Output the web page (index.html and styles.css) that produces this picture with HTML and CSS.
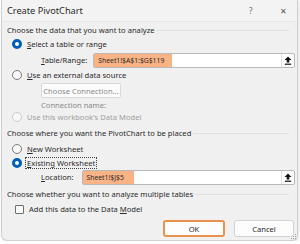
FILE: index.html
```html
<!DOCTYPE html>
<html lang="en">

<head>
    <meta charset="UTF-8">
    <meta name="viewport" content="width=device-width, initial-scale=1.0">
    <title>Create PivotChart</title>
    <link rel="stylesheet" href="styles.css">
</head>

<body>
    <div class="dialog">
        <div class="titlebar">
            <span class="title">Create PivotChart</span>
            <span class="help">?</span>
            <span class="close">&#x2715;</span>
        </div>

        <div class="content">
            <div class="group-head head-1">Choose the data that you want to analyze</div>

            <div class="radio-row radio-1">
                <span class="radio checked"></span>
                <span><u>S</u>elect a table or range</span>
            </div>
            <div class="field-row row-range">
                <span class="field-label"><u>T</u>able/Range:</span>
                <div class="ref-input">
                    <span class="ref-value">Sheet1!$A$1:$G$119</span>
                    <span class="ref-btn">
                        <svg width="8" height="9" viewBox="0 0 8 9">
                            <path d="M4 0.5 L7.5 4 L5.3 4 L5.3 6.5 L2.7 6.5 L2.7 4 L0.5 4 Z" fill="#111" />
                            <rect x="0.8" y="7.6" width="6.4" height="1.2" fill="#111" />
                        </svg>
                    </span>
                </div>
            </div>

            <div class="radio-row radio-2">
                <span class="radio"></span>
                <span><u>U</u>se an external data source</span>
            </div>
            <div class="conn-btn">Choose Connection...</div>
            <div class="conn-name">Connection name:</div>
            <div class="radio-row radio-3 disabled">
                <span class="radio"></span>
                <span>Use this workbook's Data Model</span>
            </div>

            <div class="group-head head-2">Choose where you want the PivotChart to be placed</div>

            <div class="radio-row radio-4">
                <span class="radio"></span>
                <span><u>N</u>ew Worksheet</span>
            </div>
            <div class="radio-row radio-5">
                <span class="radio checked"></span>
                <span class="focus"><u>E</u>xisting Worksheet</span>
            </div>
            <div class="field-row row-location">
                <span class="field-label"><u>L</u>ocation:</span>
                <div class="ref-input">
                    <span class="ref-value">Sheet1!$J$5</span>
                    <span class="ref-btn">
                        <svg width="8" height="9" viewBox="0 0 8 9">
                            <path d="M4 0.5 L7.5 4 L5.3 4 L5.3 6.5 L2.7 6.5 L2.7 4 L0.5 4 Z" fill="#111" />
                            <rect x="0.8" y="7.6" width="6.4" height="1.2" fill="#111" />
                        </svg>
                    </span>
                </div>
            </div>

            <div class="group-head head-3">Choose whether you want to analyze multiple tables</div>

            <div class="check-row">
                <span class="checkbox"></span>
                <span>Add this data to the Data <u>M</u>odel</span>
            </div>

            <div class="buttons">
                <div class="btn btn-ok">OK</div>
                <div class="btn">Cancel</div>
            </div>
        </div>

        <svg class="grip" width="8" height="8" viewBox="0 0 8 8">
            <rect x="6" y="2" width="1" height="1" fill="#a0a0a0" />
            <rect x="4" y="4" width="1" height="1" fill="#a0a0a0" />
            <rect x="6" y="4" width="1" height="1" fill="#a0a0a0" />
            <rect x="2" y="6" width="1" height="1" fill="#a0a0a0" />
            <rect x="4" y="6" width="1" height="1" fill="#a0a0a0" />
            <rect x="6" y="6" width="1" height="1" fill="#a0a0a0" />
        </svg>
    </div>
</body>

</html>
```

FILE: styles.css
```css
* {
    margin: 0;
    padding: 0;
    box-sizing: border-box;
}

body {
    background: #ffffff;
    font-family: 'Noto Sans', 'Open Sans', sans-serif;
    font-size: 7.6px;
    color: #2b2b2b;
    overflow: hidden;
}

u {
    text-decoration-thickness: 0.5px;
    text-underline-offset: 1px;
}

.dialog {
    position: relative;
    width: 297px;
    height: 241px;
    margin-left: 1px;
    background: #f0f0f0;
    border: 1px solid #cfcfcf;
    border-top: none;
    border-radius: 0 0 6px 6px;
    box-shadow: 1px 1px 3px rgba(0, 0, 0, 0.12);
}

/* title bar */
.titlebar {
    height: 22px;
    display: flex;
    align-items: center;
    padding-left: 5px;
    background: #f3f3f3;
    border-bottom: 1px solid #e6e6e6;
}

.title {
    font-size: 9.2px;
    color: #2a2a2a;
    flex: 1;
}

.help {
    font-size: 8px;
    color: #666;
    width: 31px;
}

.close {
    font-size: 8px;
    color: #555;
    width: 17px;
}

.content {
    padding: 0 2px 0 5px;
}

/* group headers */
.group-head {
    height: 12px;
    display: flex;
    align-items: center;
    gap: 2px;
    padding-right: 6px;
    white-space: nowrap;
}

.group-head::after {
    content: '';
    flex: 1;
    height: 1px;
    background: #e0e0e0;
}

.head-1 {
    margin-top: 2px;
}

.head-2 {
    margin-top: 3px;
}

.head-3 {
    margin-top: 4px;
}

/* radio rows */
.radio-row,
.check-row {
    height: 14px;
    display: flex;
    align-items: center;
    padding-left: 5px;
    gap: 5px;
}

.radio {
    width: 10px;
    height: 10px;
    border-radius: 50%;
    border: 1px solid #7a7a7a;
    background: #f8f8f8;
    flex-shrink: 0;
}

.radio.checked {
    border: 3px solid #005fb8;
    background: #ffffff;
}

.disabled {
    color: #a0a0a0;
}

.disabled .radio {
    border-color: #cccccc;
}

.radio-1 {
    margin-top: 1px;
}

.radio-2 {
    margin-top: 1px;
}

.radio-4 {
    margin-top: 3px;
}

.focus {
    outline: 1px dotted #444;
    outline-offset: 0;
    padding: 0 1px;
    margin-left: -1px;
}

/* reference inputs */
.field-row {
    height: 14px;
    display: flex;
    align-items: center;
    padding-left: 34px;
}

.row-range {
    margin-top: 2px;
    gap: 6px;
}

.row-location {
    gap: 8px;
}

.field-label {
    white-space: nowrap;
}

.ref-input {
    flex: 1;
    height: 15px;
    display: flex;
    align-items: center;
    background: #ffffff;
    border: 1px solid #b9b9b9;
    border-radius: 2px;
}

.ref-value {
    height: 100%;
    display: flex;
    align-items: center;
    padding: 0 8px 0 4px;
    background: #f9b384;
    font-size: 6.8px;
    color: #2a2a2a;
}

.row-location .ref-value {
    padding-right: 10px;
}

.ref-btn {
    margin-left: auto;
    width: 13px;
    height: 100%;
    display: flex;
    align-items: center;
    justify-content: center;
    border-left: 1px solid #e0e0e0;
}

/* connection */
.conn-btn {
    width: 80px;
    height: 15px;
    margin: 1px 0 0 34px;
    display: flex;
    align-items: center;
    justify-content: center;
    background: #fbfbfb;
    border: 1px solid #d9d9d9;
    border-radius: 2px;
    color: #8a8a8a;
}

.conn-name {
    height: 10px;
    margin: 2px 0 0 34px;
    display: flex;
    align-items: center;
    color: #8a8a8a;
}

/* checkbox */
.check-row {
    margin-top: 2px;
    padding-left: 8px;
}

.checkbox {
    width: 9px;
    height: 9px;
    border: 1px solid #6e6e6e;
    border-radius: 1px;
    background: #f8f8f8;
}

/* buttons */
.buttons {
    margin-top: 4px;
    display: flex;
    justify-content: flex-end;
    gap: 9px;
    padding-right: 1px;
}

.btn {
    width: 60px;
    height: 17px;
    display: flex;
    align-items: center;
    justify-content: center;
    background: #fdfdfd;
    border: 1px solid #d2d2d2;
    border-radius: 3px;
}

.btn-ok {
    width: 62px;
    border: 2px solid #e9914e;
}

.grip {
    position: absolute;
    right: 0;
    bottom: 0;
}
```
